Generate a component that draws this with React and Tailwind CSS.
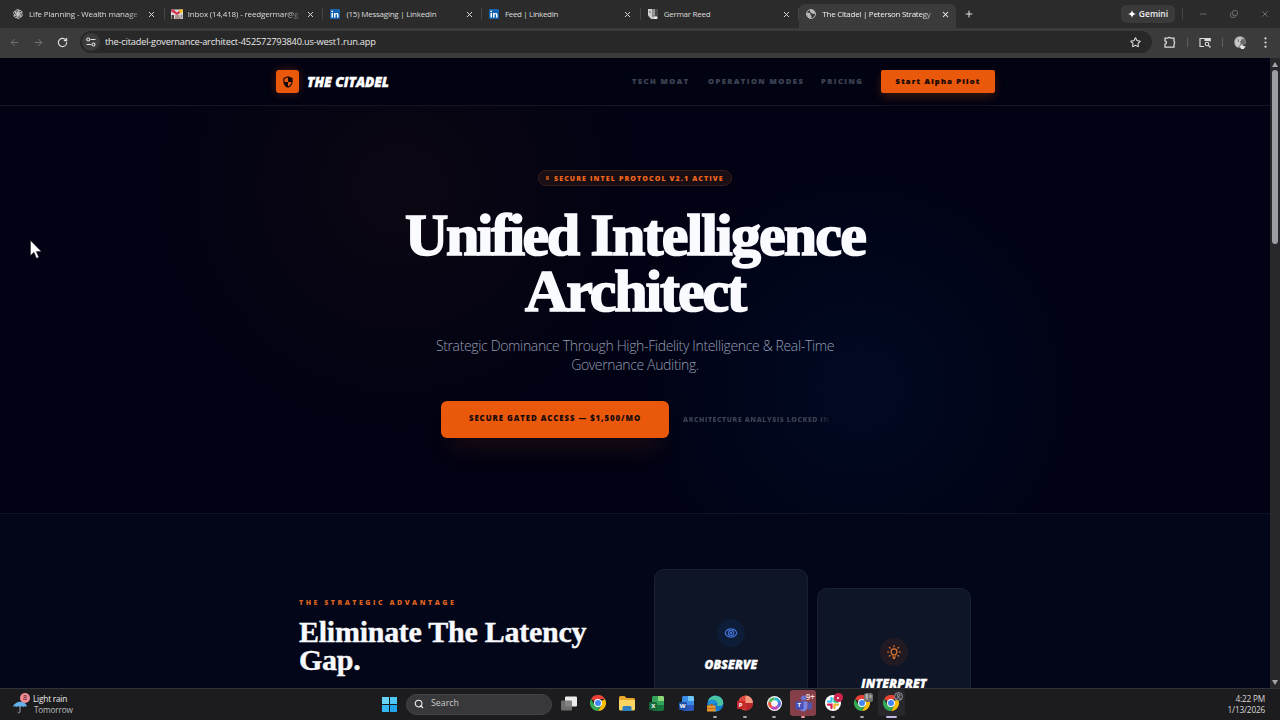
import React from "react";
import { ArrowLeft, ArrowRight, RotateCw, X, Plus, Minus, Star, Search, Copy } from "lucide-react";

const ui = "font-['Open_Sans','Noto_Sans',sans-serif]";

const LinkedIn = () => (
  <svg viewBox="0 0 20 20" className="size-2.5 shrink-0">
    <rect width="20" height="20" rx="2" fill="#1264b0" />
    <rect x="3" y="8" width="3" height="9" fill="#fff" />
    <circle cx="4.5" cy="4.7" r="1.8" fill="#fff" />
    <path d="M8 17V8h3v1.4C12.5 7 17 7.300 17 11.500V17h-3v-5c0-2.500-3-2.500-3 0v5z" fill="#fff" />
  </svg>
);

const Knot = () => (
  <svg viewBox="0 0 20 20" className="size-2.5 shrink-0" fill="none" stroke="#c9c9c9" strokeWidth="1.7">
    {[0, 60, 120, 180, 240, 300].map((a) => (
      <path key={a} transform={`rotate(${a} 10 10)`} d="M10 10 5.500 7.400V4.500a4 4 0 0 1 7-2.200L8 5v7" />
    ))}
  </svg>
);

const Mail = () => (
  <svg viewBox="0 0 24 20" className="h-2.5 w-3 shrink-0">
    <rect y="1" width="24" height="19" fill="#ddd" />
    <path d="M0 1h5l7 6 7-6h5v4l-12 7L0 5z" fill="#d53a55" />
    <path d="M16 1h8v5l-6 3z" fill="#f3c92e" />
    <path d="M1 12h5v8H1z" fill="#4b3833" />
    <path d="M8 13h9v2H8zM8 17h11v2H8z" fill="#7a4a45" />
    <path d="M19 11h4v8h-4z" fill="#9a9a9a" />
  </svg>
);

const Portrait = ({ className }) => (
  <svg viewBox="0 0 24 24" className={className}>
    <circle cx="11" cy="11" r="11" fill="#8c8c8c" />
    <path d="M2 9C4 1 13 0 17 5l-4 3-2 8-4 5C2 18 1 14 2 9z" fill="#c7c7c7" />
    <path d="M13 6h6l2 6-3 4-5-2z" fill="#6a6a6a" />
    <path d="M7 6h2v5H7zM11 9h2v3h-2z" fill="#777" />
    <path d="M11 19l4-3 2 3 5-1-4 6h-5z" fill="#e8e8e8" />
    <path d="M17 17l3-2 2 2-3 2z" fill="#222" />
  </svg>
);

const PhotoIcon = () => (
  <svg viewBox="0 0 20 20" className="size-2.5 shrink-0">
    <rect width="20" height="20" fill="#777" />
    <path d="M0 0h8v14l4 6H6L0 12z" fill="#cfcfcf" />
    <path d="M9 1h5v12H9z" fill="#999" />
    <path d="M14 0h6v15h-6z" fill="#4a4a4a" />
    <path d="M3 4h2v4H3z" fill="#666" />
    <path d="M0 14l6 6H0z" fill="#2b2b2b" />
    <path d="M11 15h7v5h-7z" fill="#eee" />
  </svg>
);

const GlobeIcon = () => (
  <svg viewBox="0 0 20 20" className="size-2.5 shrink-0">
    <circle cx="10" cy="10" r="9" fill="#3b3b3b" stroke="#b9b9b9" strokeWidth="2" />
    <path d="M2 8c4-1 7 0 7 3s3 2 2 5l-2 3C4 18 1 14 2 8zM8 2c5-2 10 2 10 7-2 2-4 0-6 0s-2-3-4-3z" fill="#b9b9b9" />
  </svg>
);

const tabs = [
  ["Life Planning - Wealth manage", <Knot />, "tracking-[-0.14px]", true],
  ["Inbox (14,418) - reedgermar@g", <Mail />, "tracking-[-0.16px]", true],
  ["(15) Messaging | LinkedIn", <LinkedIn />, "tracking-[-0.23px]", false],
  ["Feed | LinkedIn", <LinkedIn />, "tracking-[-0.36px]", false],
  ["Germar Reed", <PhotoIcon />, "tracking-[-0.28px]", false],
];

function TabStrip() {
  return (
    <div className="flex h-7 items-stretch bg-[#2b2b2b] pl-[6px] text-[8px] text-[#dcdcdc]">
      {tabs.map(([t, icon, tr, fade], i) => (
        <div key={i} className="flex w-[158.7px] shrink-0 items-center">
          <div className="flex w-[23px] shrink-0 items-center justify-center pl-px">{icon}</div>
          <div className={`h-3 w-[112px] overflow-hidden whitespace-nowrap leading-3 ${tr} ${fade ? "[mask-image:linear-gradient(to_right,#000_88%,rgba(0,0,0,0.2))]" : ""}`}>{t}</div>
          <div className="flex flex-1 items-center justify-center pr-px">
            <X className="size-[9px]" strokeWidth={2.6} />
          </div>
          <div className="h-3 w-px bg-[#454545]" />
        </div>
      ))}
      <div className="mt-1 flex w-[157px] shrink-0 items-center rounded-t-md bg-[#3b3b3b] pb-1 text-[#f2f2f2]">
        <div className="flex w-[23px] shrink-0 items-center justify-center pl-px"><GlobeIcon /></div>
        <div className="h-3 w-[112px] overflow-hidden whitespace-nowrap leading-3 tracking-[-0.27px] [mask-image:linear-gradient(to_right,#000_88%,rgba(0,0,0,0.4))]">The Citadel | Peterson Strategy</div>
        <div className="flex flex-1 items-center justify-center"><X className="size-[9px]" strokeWidth={2.8} /></div>
      </div>
      <div className="flex w-[25px] items-center justify-center"><Plus className="size-2.5 text-[#e0e0e0]" strokeWidth={2.5} /></div>
      <div className="ml-auto flex items-center">
        <div className="flex h-[18px] w-[54px] items-center justify-center gap-[3px] rounded-[5px] bg-[#3a3a3a] text-[8.500px] font-semibold text-[#eee]">
          <svg viewBox="0 0 20 20" className="size-2"><path d="M10 0q1 9 10 10-9 1-10 10-1-9-10-10 9-1 10-10z" fill="#fff" /></svg>
          Gemini
        </div>
        <div className="ml-[7px] h-3 w-px bg-[#454545]" />
        <div className="flex w-[87px] items-center justify-between pl-[15px] text-[#777]">
          <Minus className="size-[10px]" strokeWidth={2} />
          <Copy className="size-[8px] -scale-x-100 rotate-180" strokeWidth={2.6} />
          <X className="size-[10px]" strokeWidth={2} />
        </div>
        <div className="w-[10px]" />
      </div>
    </div>
  );
}

function Toolbar() {
  return (
    <div className="flex h-[30px] items-center bg-[#3b3b3b] pb-[2px] pl-[9px] text-[#dcdcdc]">
      <ArrowLeft className="size-[11px] text-[#777]" />
      <ArrowRight className="ml-[13px] size-[11px] text-[#777]" />
      <RotateCw className="ml-[13px] size-[11px]" strokeWidth={2.6} />
      <div className="ml-[12px] flex h-[22px] w-[1072px] items-center rounded-full bg-[#282828]">
        <div className="ml-[2px] flex size-[18px] items-center justify-center rounded-full bg-[#3b3b3b]">
          <svg viewBox="0 0 20 20" className="size-[10px]" fill="none" stroke="#ddd" strokeWidth="2.200">
            <circle cx="4.500" cy="5" r="3" /><path d="M9 5h10M1 15h9" /><circle cx="15" cy="15" r="3" />
          </svg>
        </div>
        <div className="ml-[5px] whitespace-nowrap text-[9.25px] tracking-[-0.2px] text-[#e8e8e8]">the-citadel-governance-architect-452572793840.us-west1.run.app</div>
        <Star className="mr-[11px] ml-auto size-[11px]" strokeWidth={2.4} />
      </div>
      <svg viewBox="0 0 24 24" className="ml-[12px] size-[12px]" fill="none" stroke="#dcdcdc" strokeWidth="2.500">
        <path d="M2 4h6a3 3 0 0 1 5 0h7v7a3 3 0 0 1 0 5v6H2v-6a3 3 0 0 0 0-6z" />
      </svg>
      <div className="ml-[11px] h-[9px] w-px bg-[#606060]" />
      <svg viewBox="0 0 24 22" className="ml-[11px] h-[11px] w-3" fill="none" stroke="#dcdcdc" strokeWidth="2.300">
        <path d="M10 19H2V3h20v6" /><path d="M12 3h10v4H12z" fill="#dcdcdc" /><circle cx="16" cy="14" r="3.500" /><path d="m19 17 4 4" />
      </svg>
      <div className="ml-[11px] h-[9px] w-px bg-[#606060]" />
      <Portrait className="ml-[11px] size-[13px]" />
      <svg viewBox="0 0 4 20" className="ml-[17px] h-[11px] w-[3px]" fill="#ddd"><circle cx="2" cy="2.500" r="2" /><circle cx="2" cy="10" r="2" /><circle cx="2" cy="17.500" r="2" /></svg>
    </div>
  );
}

function Nav() {
  return (
    <div className="flex h-12 items-center border-b border-[#131523] bg-[#010213]/80 pl-[276px]">
      <div className="flex size-[23px] items-center justify-center rounded-[3px] bg-[#ea580c] shadow-[0_0_10px_rgba(234,88,12,0.3)]">
        <svg viewBox="0 0 24 24" className="size-[14px]">
          <path d="M12 2 4 5v6c0 5 3.400 9.600 8 11 4.600-1.400 8-6 8-11V5z" fill="#160b08" />
          <path d="M12 4.400V12H6V6.500zM12 12h6c-.5 3.600-2.700 6.700-6 7.800z" fill="#ea580c" />
        </svg>
      </div>
      <div className="ml-[8px] w-[90px] pt-px whitespace-nowrap text-[13.500px] font-extrabold italic tracking-[0px] text-white [-webkit-text-stroke:0.400px_#fff]">THE CITADEL</div>
      <div className="ml-[235px] flex w-[249px] whitespace-nowrap text-[7.5px] font-extrabold tracking-[1.5px] text-[#3d4353] [-webkit-text-stroke:0.200px_#3d4353]">
        <span className="w-[76px]">TECH MOAT</span>
        <span className="w-[113px]">OPERATION MODES</span>
        <span>PRICING</span>
      </div>
      <div className="flex h-[23px] w-[114px] items-center justify-center rounded-[2px] bg-[#ea580c] text-[7.5px] font-extrabold tracking-[1.25px] whitespace-nowrap text-[#140806] shadow-[0_4px_10px_rgba(234,88,12,0.25)] [-webkit-text-stroke:0.200px_#140806]">Start Alpha Pilot</div>
    </div>
  );
}

function Hero() {
  return (
    <div className="flex h-[408px] flex-col items-center border-b border-[#101321]">
      <div className="mt-[64px] flex h-4 w-[194px] items-center rounded-full border border-[#3a1d18] bg-[#190e14] pl-[7px]">
        <span className="mr-[5px] h-1 w-[3px] bg-[#a5481a]" />
        <span className="pt-px text-[7px] leading-[14px] font-extrabold tracking-[1.13px] whitespace-nowrap text-[#f0661c]">SECURE INTEL PROTOCOL V2.1 ACTIVE</span>
      </div>
      <h1 className="mt-[21px] text-center font-['Liberation_Serif',serif] text-[60px] leading-[56px] font-bold tracking-[-2.1px] whitespace-nowrap text-[#fafbff] [-webkit-text-stroke:1.700px_#fafbff]">
        <span className="tracking-[-2.500px]">Unified</span> <span className="tracking-[-1.850px]">Intelligence</span><br />Architect
      </h1>
      <p className="mt-[17px] text-center text-[14px] leading-[19px] font-light tracking-[-0.35px] whitespace-nowrap text-[#949db0]">
        Strategic Dominance Through High-Fidelity Intelligence &amp; Real-Time<br />Governance Auditing.
      </p>
      <div className="mt-[27px] flex items-center self-start pl-[441px]">
        <div className="flex h-[37px] w-[228px] items-center justify-center rounded-[6px] bg-[#ea580c] pb-px text-[7.800px] font-extrabold tracking-[0.95px] whitespace-nowrap text-[#160906] shadow-[0_18px_24px_-8px_rgba(234,88,12,0.13)]">SECURE GATED ACCESS — $1,500/MO</div>
        <div className="ml-[14px] w-[148px] overflow-hidden pt-px text-[7px] leading-[10px] font-extrabold tracking-[0.55px] whitespace-nowrap text-[#3b4150] [mask-image:linear-gradient(to_right,#000_92%,transparent)]">ARCHITECTURE ANALYSIS LOCKED IN</div>
      </div>
    </div>
  );
}

function Card({ title, icon, tint, className }) {
  return (
    <div className={`flex h-[180px] w-[154px] shrink-0 flex-col items-center rounded-[10px] border border-[#1a2030] bg-[#0e1527] pt-[49px] ${className}`}>
      <div className={`flex size-[28px] items-center justify-center rounded-full ${tint}`}>{icon}</div>
      <div className="mt-[10px] text-[12px] leading-4 font-extrabold tracking-[0.2px] text-white italic [-webkit-text-stroke:0.400px_#fff]">{title}</div>
    </div>
  );
}

function Advantage() {
  return (
    <div className="flex h-[174px] overflow-hidden bg-[#020618] pl-[299px]">
      <div className="w-[355px] pt-[84px]">
        <div className="text-[7px] leading-[10px] font-extrabold tracking-[2.52px] whitespace-nowrap text-[#dc611f]">THE STRATEGIC ADVANTAGE</div>
        <h2 className="mt-[10px] font-['Liberation_Serif',serif] text-[30px] leading-[28px] font-bold tracking-[-0.26px] whitespace-nowrap text-[#f8f9fc] [-webkit-text-stroke:0.400px_#f8f9fc]">Eliminate The Latency<br />Gap.</h2>
      </div>
      <Card
        title="OBSERVE" tint="bg-[#0d1d38]" className="mt-[55px]"
        icon={<svg viewBox="0 0 24 24" className="size-[14px]" fill="none" stroke="#416fd0" strokeWidth="2"><path d="M2 12c1.500-4.500 5-7 10-7s8.500 2.500 10 7c-1.500 4.500-5 7-10 7s-8.500-2.500-10-7z" /><circle cx="12" cy="12" r="4.500" /><circle cx="12" cy="12" r="1.200" /></svg>}
      />
      <Card
        title="INTERPRET" tint="bg-[#211a22]" className="mt-[74px] ml-[9px]"
        icon={<svg viewBox="0 0 24 24" className="size-[14px]" fill="none" stroke="#e67a32" strokeWidth="2" strokeLinecap="round"><path d="M9 17c0-2-2-2.500-2-5.500a5 5 0 0 1 10 0c0 3-2 3.500-2 5.500zM9.500 20.500h5M11 23h2M12 1v2M4 4l1.500 1.500M20 4l-1.500 1.500M1 12h2M21 12h2M4 19l1-1M20 19l-1-1" /></svg>}
      />
    </div>
  );
}

const Chrome = ({ className = "size-4" }) => (
  <svg viewBox="0 0 48 48" className={className}>
    <path d="M24 24 3.200 12A24 24 0 0 1 44.800 12H24z" fill="#ea4335" />
    <path d="M24 24 44.800 12A24 24 0 0 1 24 48l10.400-18z" fill="#fbbc05" />
    <path d="M24 24 34.400 30 24 48A24 24 0 0 1 3.200 12L13.600 30z" fill="#34a853" />
    <circle cx="24" cy="24" r="12" fill="#fff" />
    <circle cx="24" cy="24" r="9" fill="#4285f4" />
  </svg>
);

const Office = ({ letter, shades, badge }) => (
  <div className="relative size-[15px]">
    <svg viewBox="0 0 15 15" className="size-[15px]">
      <rect x="3" width="12" height="14" rx="1.500" fill={shades[0]} />
      <path d="M9 0h4.500A1.500 1.500 0 0 1 15 1.500V5H9z" fill={shades[1]} />
      <path d="M3 9h12v4a2 2 0 0 1-2 2H5a2 2 0 0 1-2-2z" fill={shades[2]} />
    </svg>
    <span className={`absolute bottom-[1px] left-0 flex size-[8px] items-center justify-center rounded-[1px] text-[6px] leading-none font-bold text-white ${badge}`}>{letter}</span>
  </div>
);

const Edge = () => (
  <svg viewBox="0 0 34 34" className="size-[17px]">
    <circle cx="17" cy="17" r="16" fill="#1577c8" />
    <path d="M2 13C5 0 22-2 29 7c5 6 5 15-4 15-5 0-6-2-4-5-2-8-12-10-19-4z" fill="#49c5a0" />
    <path d="M1 16C6 7 17 8 20 16c-5-1-8 2-7 7 1 6 8 8 14 6-9 8-26 3-26-13z" fill="#218ed8" />
    <path d="M0 21h17v12H0z" fill="#e9952e" /><path d="M5 18h7v3H5z" fill="#b35e10" /><path d="M0 26h17v2H0z" fill="#bd6d18" />
  </svg>
);

const PowerPoint = () => (
  <div className="relative size-4">
    <svg viewBox="0 0 32 32" className="size-4"><circle cx="17" cy="16" r="15" fill="#d9473d" /><path d="M17 1a15 15 0 0 1 15 15H17z" fill="#f39a80" /><path d="M17 16h15a15 15 0 0 1-15 15z" fill="#b9262e" /></svg>
    <span className="absolute bottom-[2px] left-0 flex size-[8px] items-center justify-center rounded-[1px] bg-[#c72727] text-[6px] leading-none font-bold text-white">P</span>
  </div>
);

const Ring = () => (
  <svg viewBox="0 0 32 32" className="size-[15px]" fill="none">
    <circle cx="16" cy="16" r="16" fill="#f5f5f5" />
    <g strokeWidth="6">
      <path d="M16 6a10 10 0 0 1 10 7" stroke="#25b6d8" /><path d="M26 12a10 10 0 0 1-3 11" stroke="#5d6ae0" /><path d="M23 23a10 10 0 0 1-13 1" stroke="#c83dbb" /><path d="M10 24a10 10 0 0 1-4-11" stroke="#f2503d" /><path d="M6 13a10 10 0 0 1 10-7" stroke="#54b95c" />
    </g>
  </svg>
);

const Teams = () => (
  <div className="relative flex h-[26px] w-[26px] items-center justify-center rounded-[3px] bg-[#853f48]">
    <svg viewBox="0 0 34 34" className="size-[17px]"><circle cx="17" cy="6" r="5" fill="#6a75d8" /><path d="M8 13h17v11a8.500 8.500 0 0 1-17 0z" fill="#7883e6" /><path d="M26 15h8v9a6 6 0 0 1-8 5z" fill="#5058b5" /><rect x="1" y="13" width="16" height="16" rx="2" fill="#454fb5" /></svg>
    <span className="absolute top-[11px] left-[7px] text-[6px] leading-[8px] font-bold text-white">T</span>
    <span className="absolute top-[2px] right-[2px] text-[8px] leading-[9px] font-semibold tracking-[-0.3px] text-[#ffe0e0]">9+</span>
  </div>
);

const Slack = () => (
  <div className="relative size-4">
    <svg viewBox="0 0 32 32" className="size-4" strokeWidth="4.500" strokeLinecap="round">
      <circle cx="16" cy="16" r="16" fill="#fff" />
      <path d="M13 6v7M6 13h7" stroke="#36c5f0" /><path d="M19 13h7M19 6v7" stroke="#2eb67d" /><path d="M19 19v7M26 19h-7" stroke="#ecb22e" /><path d="M6 19h7v7" fill="none" stroke="#e01e5a" />
    </svg>
    <span className="absolute -top-[2px] -right-[2px] flex size-[9px] items-center justify-center rounded-full bg-[#cf234f]"><i className="size-[2px] rounded-full bg-white" /></span>
  </div>
);

function Item({ children, bar }) {
  return (
    <div className="flex h-[30px] w-[29.35px] shrink-0 flex-col items-center">
      <div className="flex h-[27px] items-center justify-center">{children}</div>
      {bar && <div className={`-mt-px h-[2px] shrink-0 rounded-full ${bar}`} />}
    </div>
  );
}

function Taskbar() {
  const dot = "w-[4px] bg-[#a5a5a5]";
  return (
    <div className="flex h-8 items-center border-t border-[#30323b] bg-[#1c1c1e]">
      <div className="relative ml-[13px] w-[17px]">
        <svg viewBox="0 0 34 36" className="h-[18px] w-[17px]"><path d="M0 22C2 10 26 6 28 22q-4-3-7 0-4-3-7 0-4-3-7 0-4-3-7 0z" fill="#63b1ea" /><path d="M14 20v12q-3 4-5 0" fill="none" stroke="#9aa4ae" strokeWidth="2" /></svg>
        <span className="absolute -top-[3px] left-[7px] flex size-[10px] items-center justify-center rounded-full bg-[#f18b94] text-[7px] leading-none text-[#401018]">8</span>
      </div>
      <div className="-mt-[2px] ml-[3px] w-[346px] text-[8.25px] leading-[11px] tracking-[-0.2px] whitespace-nowrap text-[#ededed]">Light rain<br /><span className="pl-px text-[#bbb]">Tomorrow</span></div>
      <div className="ml-[3px] grid size-[15px] grid-cols-2 gap-px">
        <i className="bg-[#67d4fb]" /><i className="bg-[#4dc6f8]" /><i className="bg-[#37b8f4]" /><i className="bg-[#22a5ec]" />
      </div>
      <div className="ml-[9px] flex h-[21px] w-[146px] items-center rounded-full border border-[#434346] bg-[#38383b] pb-px pl-[7px] text-[8.800px] text-[#c9c9c9]">
        <Search className="mr-[7px] size-[10px] text-[#eee]" strokeWidth={2.6} />Search
      </div>
      <div className="ml-[2px] flex items-center">
        <Item><svg viewBox="0 0 32 30" className="h-[15px] w-4"><rect x="8" y="1" width="24" height="20" rx="2" fill="#ededed" /><rect y="9" width="22" height="20" rx="2" fill="#777" opacity=".9" /></svg></Item>
        <Item><Chrome /></Item>
        <Item><svg viewBox="0 0 32 30" className="h-[15px] w-4"><path d="M0 3q0-3 3-3h8l4 4h14q3 0 3 3v20H0z" fill="#e8a92b" /><path d="M0 8h32v18q0 3-3 3H3q-3 0-3-3z" fill="#fbd463" /><path d="M7 30v-7q0-3 3-3h12q3 0 3 3v7z" fill="#2d7fc1" /></svg></Item>
        <Item><Office letter="X" shades={["#33a35c", "#8bd676", "#18763d"]} badge="bg-[#146b37]" /></Item>
        <Item><Office letter="W" shades={["#3a8ce6", "#6dc5f8", "#2c57bd"]} badge="bg-[#1d4fa5]" /></Item>
        <Item bar={dot}><Edge /></Item>
        <Item bar={dot}><PowerPoint /></Item>
        <Item bar={dot}><Ring /></Item>
        <Item bar="w-[4px] bg-[#ed9297] relative"><Teams /></Item>
        <Item bar={dot}><Slack /></Item>
        <Item bar={dot}><div className="relative"><Chrome /><svg viewBox="0 0 18 18" className="absolute -top-[2px] -right-[3px] size-[9px]"><rect width="18" height="18" rx="5" fill="#707070" /><path d="M3 2h5v12l-5-3zM11 4h4v6h-4z" fill="#aaa" /></svg></div></Item>
        <Item bar="w-[11px] bg-[#c7b7e8] relative"><div className="relative flex h-[26px] w-[27px] items-center justify-center rounded-[3px] bg-[#28282c]"><Chrome /><svg viewBox="0 0 18 18" className="absolute top-[2px] right-[2px] size-[9px]"><circle cx="9" cy="9" r="8" fill="#38383c" stroke="#a9a9b2" strokeWidth="1.500" /><circle cx="9" cy="7" r="2.500" fill="none" stroke="#bbb" strokeWidth="1.500" /><path d="M4 15q5-7 10 0" fill="none" stroke="#bbb" strokeWidth="1.500" /></svg></div></Item>
      </div>
      <div className="mr-[15px] ml-auto text-right text-[8.250px] leading-[10.500px] tracking-[-0.18px] text-[#d8d8d8]">4:22 PM<br />1/13/2026</div>
    </div>
  );
}

export default function App() {
  return (
    <div className={`relative flex h-[720px] w-[1280px] flex-col overflow-hidden ${ui}`}>
      <TabStrip />
      <Toolbar />
      <div className="flex h-[630px] overflow-hidden">
        <div className="w-[1270px] bg-[#010213] bg-[radial-gradient(circle_240px_at_400px_130px,rgba(30,16,18,0.38),transparent),radial-gradient(circle_240px_at_860px_330px,rgba(0,18,55,0.45),transparent)]">
          <Nav />
          <Hero />
          <Advantage />
        </div>
        <div className="flex w-[10px] flex-col items-center bg-[#28282c] pt-[4px] pb-[3px]">
          <svg viewBox="0 0 6 5" className="h-[5px] w-[6px] shrink-0"><path d="M3 0 6 5H0z" fill="#a5a5aa" /></svg>
          <div className="mt-[3px] h-[174px] w-[6px] rounded-full bg-[#9c9ca3]" />
          <svg viewBox="0 0 6 5" className="mt-auto h-[5px] w-[6px]"><path d="M0 0h6L3 5z" fill="#a5a5aa" /></svg>
        </div>
      </div>
      <Taskbar />
      <svg viewBox="0 0 12 19" className="absolute top-[240px] left-[30px] h-[19px] w-3"><path d="M.5.5v15l3.500-3.200 2.500 6 2.300-1-2.500-5.800h5z" fill="#fff" stroke="#222" strokeWidth=".5" /></svg>
    </div>
  );
}
